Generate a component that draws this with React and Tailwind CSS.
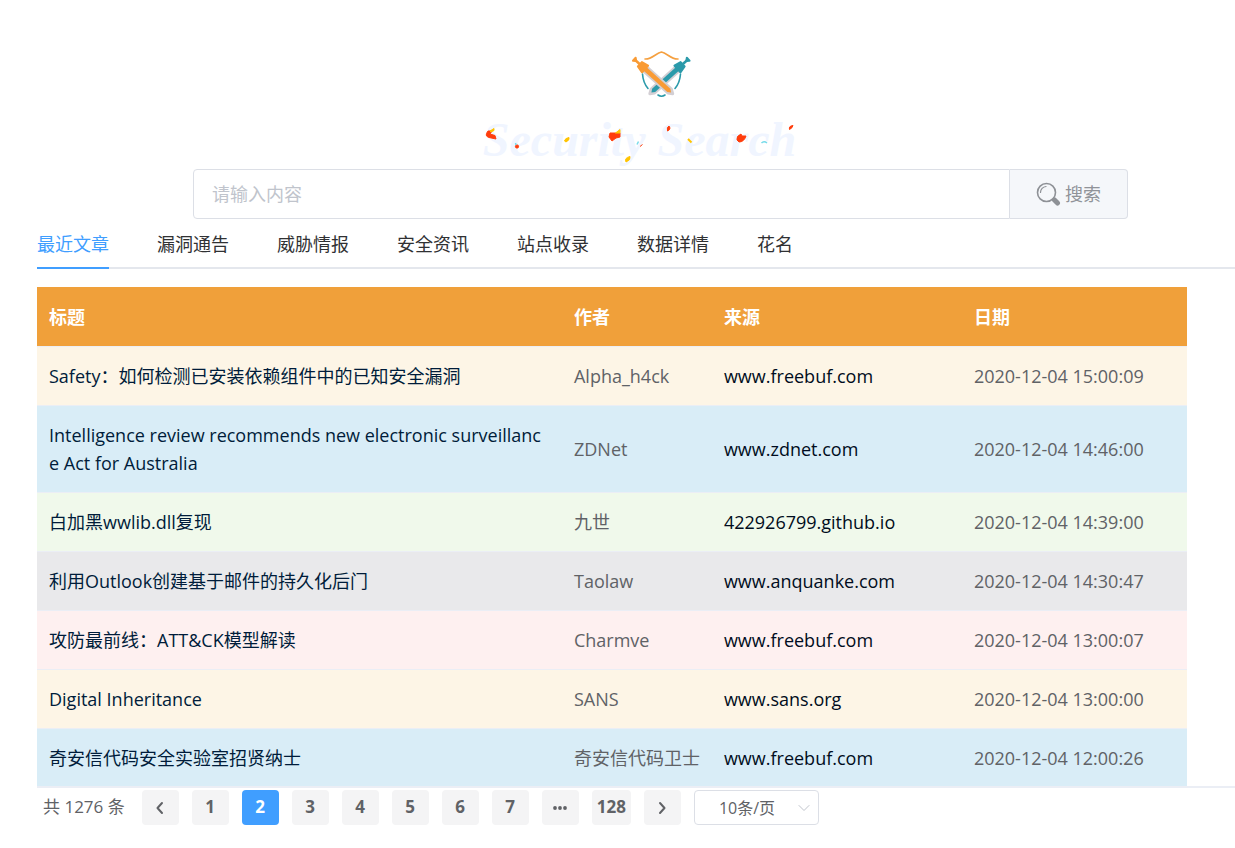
import React from "react";

const tabs = ["最近文章", "漏洞通告", "威胁情报", "安全资讯", "站点收录", "数据详情", "花名"];

const rows = [
  { title: "Safety：如何检测已安装依赖组件中的已知安全漏洞", author: "Alpha_h4ck", source: "www.freebuf.com", date: "2020-12-04 15:00:09", tone: "bg-[#fdf5e6]" },
  { title: "Intelligence review recommends new electronic surveillance Act for Australia", author: "ZDNet", source: "www.zdnet.com", date: "2020-12-04 14:46:00", tone: "bg-[#d9edf7]" },
  { title: "白加黑wwlib.dll复现", author: "九世", source: "422926799.github.io", date: "2020-12-04 14:39:00", tone: "bg-[#f0f9eb]" },
  { title: "利用Outlook创建基于邮件的持久化后门", author: "Taolaw", source: "www.anquanke.com", date: "2020-12-04 14:30:47", tone: "bg-[#e9e9eb]" },
  { title: "攻防最前线：ATT&CK模型解读", author: "Charmve", source: "www.freebuf.com", date: "2020-12-04 13:00:07", tone: "bg-[#fef0f0]" },
  { title: "Digital Inheritance", author: "SANS", source: "www.sans.org", date: "2020-12-04 13:00:00", tone: "bg-[#fdf5e6]" },
  { title: "奇安信代码安全实验室招贤纳士", author: "奇安信代码卫士", source: "www.freebuf.com", date: "2020-12-04 12:00:26", tone: "bg-[#d9edf7]" },
];

const pages = ["1", "2", "3", "4", "5", "6", "7"];

function Syringe({ color }) {
  return (
    <g>
      <path d="M-2.500 -13V21L0 25L2.500 21V-13Z" fill="#fff" stroke="#d3cfd4" strokeWidth="3.200" strokeLinejoin="round" />
      <path d="M-2.300 -13V20L0 23L2.300 20V-13Z" fill={color} />
      <path d="M-3 -19H3L4.500 -12H-4.500Z" fill={color} stroke={color} strokeWidth="2" strokeLinejoin="round" />
      <path d="M0 -19V-25" stroke={color} strokeWidth="2.500" />
      <path d="M-2 -26.500L0 -24L2 -26.500Z" fill={color} stroke={color} strokeWidth="2" strokeLinejoin="round" />
    </g>
  );
}

function Logo() {
  return (
    <svg width="60" height="50" viewBox="0 0 60 50" fill="none" aria-label="Security Search logo" role="img">
      <path d="M14 10C21 10.500 25 4 30.500 3C36 4 40 10.500 47 10" stroke="#f5a040" strokeWidth="1.600" strokeLinecap="round" />
      <path d="M11.500 25C12 32 14 36 17 39.500M49.500 25C49 32 47 36 44 39.500M27 46Q30.500 48.500 34 46" stroke="#2b9aaa" strokeWidth="1.600" strokeLinecap="round" />
      <g transform="translate(37.500 28) rotate(48)">
        <Syringe color="#2b9aaa" />
      </g>
      <g transform="translate(23 28) rotate(-48)">
        <Syringe color="#f99b35" />
      </g>
    </svg>
  );
}

function Spots() {
  return (
    <svg className="absolute inset-0" width="330" height="60" viewBox="0 0 330 60" strokeWidth="1" strokeLinejoin="round" aria-hidden="true">
      <g fill="#ff3d0c" stroke="#ff3d0c">
        <path d="M13 21Q9 26 14 27.500L21 29L20 25.500L15 24L17 21Z" />
        <circle cx="42" cy="36.500" r="1.600" />
        <path d="M135 23L145 23L145 27L141 28L137 31L134 27Z" />
        <path d="M165 36.500L167.500 34.500" />
        <path d="M192.500 21Q191.500 17 194 16L195 18Q195 20 192.500 21Z" />
        <path d="M262 30Q261 26 266 24L267 26L271 26Q269 32 264 32Z" />
        <path d="M314.500 19.500Q313.500 16 318 15.500Q317.500 18 314.500 19.500Z" />
      </g>
      <g fill="#ffc400" stroke="#ffc400">
        <path d="M15 21L19 18.500L19 20.500L16 22Z" />
        <path d="M89.500 31Q90 28 94 27.500Q95 30 91 32Z" />
        <path d="M140.500 23L145 19.500L145 23Z" />
        <path d="M151 52Q149 48 155 46.500Q156 50 151 52Z" />
        <path d="M213 29L216.500 32.500" strokeWidth="2" />
      </g>
      <path d="M40.500 33L41 35M162 34.500L163.500 31.500M286.500 33Q289 30.500 292 33" stroke="#76dbea" strokeWidth="1.500" fill="none" />
    </svg>
  );
}

function SearchIcon() {
  return (
    <svg width="25" height="25" viewBox="0 0 25 25" fill="none" aria-hidden="true">
      <circle cx="10.500" cy="10.500" r="9" stroke="#8e9196" strokeWidth="1.600" />
      <path d="M4.500 10.500A6 6 0 0 1 10 4.500" stroke="#8e9196" strokeWidth="1.200" strokeLinecap="round" />
      <path d="M18.500 18L21.500 21" stroke="#8e9196" strokeWidth="5" strokeLinecap="round" />
    </svg>
  );
}

function Chevron({ d, className }) {
  return (
    <svg className={className} width="16" height="16" viewBox="0 0 16 16" fill="none" stroke="currentColor" strokeLinecap="round" strokeLinejoin="round" aria-hidden="true">
      <path d={d} />
    </svg>
  );
}

const pageButton = "flex h-[35px] min-w-[37px] items-center justify-center rounded-sm px-[5px] font-bold";

export default function App() {
  return (
    <main className="overflow-hidden bg-white pt-[49px] pl-[37px] font-['Open_Sans','Noto_Sans_CJK_SC',sans-serif] text-lg text-[#303133]">
      <header className="mr-[107px] ml-[156px]">
        <div className="flex justify-center">
          <Logo />
        </div>
        <div className="flex justify-center pt-[11px] pr-[42px]">
          <h1 className="relative h-[60px] w-[330px] text-center font-['Brush_Script_MT','Liberation_Serif',cursive] text-5xl leading-[60px] whitespace-nowrap text-[#f0f5ff] font-bold italic">
            Security Search
            <Spots />
          </h1>
        </div>
        <form className="-mt-px flex h-[50px]" onSubmit={(e) => e.preventDefault()}>
          <input aria-label="搜索内容" placeholder="请输入内容" className="min-w-0 flex-1 rounded-l border border-[#dcdfe6] px-[18px] outline-none placeholder:text-[#c0c4cc]" />
          <button className="flex w-[118px] items-center justify-center gap-1 rounded-r border border-l-0 border-[#dcdfe6] bg-[#f5f7fa] text-[#909399]">
            <SearchIcon />
            搜索
          </button>
        </form>
      </header>

      <nav className="flex h-[50px] gap-12 border-b-2 border-[#e4e7ed]">
        {tabs.map((tab, i) => (
          <a key={tab} href="#" className={i === 0 ? "h-[50px] border-b-2 border-[#409eff] leading-[50px] text-[#409eff]" : "h-[50px] leading-[50px]"}>
            {tab}
          </a>
        ))}
      </nav>

      <div className="mt-[18px] border-b-2 border-[#ebeef5] pr-12">
        <table className="w-full table-fixed border-separate border-spacing-0 text-left leading-7">
          <colgroup>
            <col className="w-[45.65%]" />
            <col className="w-[13.04%]" />
            <col className="w-[21.74%]" />
            <col />
          </colgroup>
          <thead className="bg-[#f0a03a] text-white">
            <tr>
              {["标题", "作者", "来源", "日期"].map((h) => (
                <th key={h} className="border-b border-[#ebeef5] px-3 pt-4 pb-[15px] font-bold">{h}</th>
              ))}
            </tr>
          </thead>
          <tbody className="[&>tr:last-child>td]:border-b-0 [&>tr:last-child>td]:pb-[14px]">
            {rows.map((r) => (
              <tr key={r.date} className={r.tone}>
                <td className="border-b border-[#ebeef5] px-3 py-[15px] break-all text-[#001c3a]"><a href="#">{r.title}</a></td>
                <td className="border-b border-[#ebeef5] px-3 py-[15px] whitespace-nowrap text-[#606266]">{r.author}</td>
                <td className="border-b border-[#ebeef5] px-3 py-[15px] text-[#000c20]"><a href="#">{r.source}</a></td>
                <td className="border-b border-[#ebeef5] px-3 py-[15px] whitespace-nowrap text-[#606266]">{r.date}</td>
              </tr>
            ))}
          </tbody>
        </table>
      </div>

      <nav aria-label="分页" className="flex items-center gap-[13px] pt-[2px] pl-[6px] text-[17px] text-[#606266]">
        <span className="mr-1 whitespace-nowrap">共 1276 条</span>
        <button aria-label="上一页" className={`${pageButton} bg-[#f4f4f5]`}>
          <Chevron d="M10 3L5.500 8L10 13" className="stroke-2" />
        </button>
        {pages.map((p) => (
          <button key={p} className={p === "2" ? `${pageButton} bg-[#409eff] text-white` : `${pageButton} bg-[#f4f4f5]`}>
            {p}
          </button>
        ))}
        <button aria-label="更多" className={`${pageButton} bg-[#f4f4f5]`}>
          <svg width="16" height="16" viewBox="0 0 16 16" fill="currentColor" aria-hidden="true">
            <circle cx="3" cy="8" r="1.900" />
            <circle cx="8" cy="8" r="1.900" />
            <circle cx="13" cy="8" r="1.900" />
          </svg>
        </button>
        <button className={`${pageButton} bg-[#f4f4f5]`}>128</button>
        <button aria-label="下一页" className={`${pageButton} bg-[#f4f4f5]`}>
          <Chevron d="M6 3L10.500 8L6 13" className="stroke-2" />
        </button>
        <div className="relative">
          <select aria-label="每页条数" className="h-[35px] w-[125px] appearance-none rounded border border-[#dcdfe6] bg-white pl-6 text-base outline-none">
            <option>10条/页</option>
            <option>20条/页</option>
          </select>
          <Chevron d="M3 5.500L8 10.500L13 5.500" className="pointer-events-none absolute top-[10px] right-[7px] text-[#c0c4cc]" />
        </div>
      </nav>
    </main>
  );
}
